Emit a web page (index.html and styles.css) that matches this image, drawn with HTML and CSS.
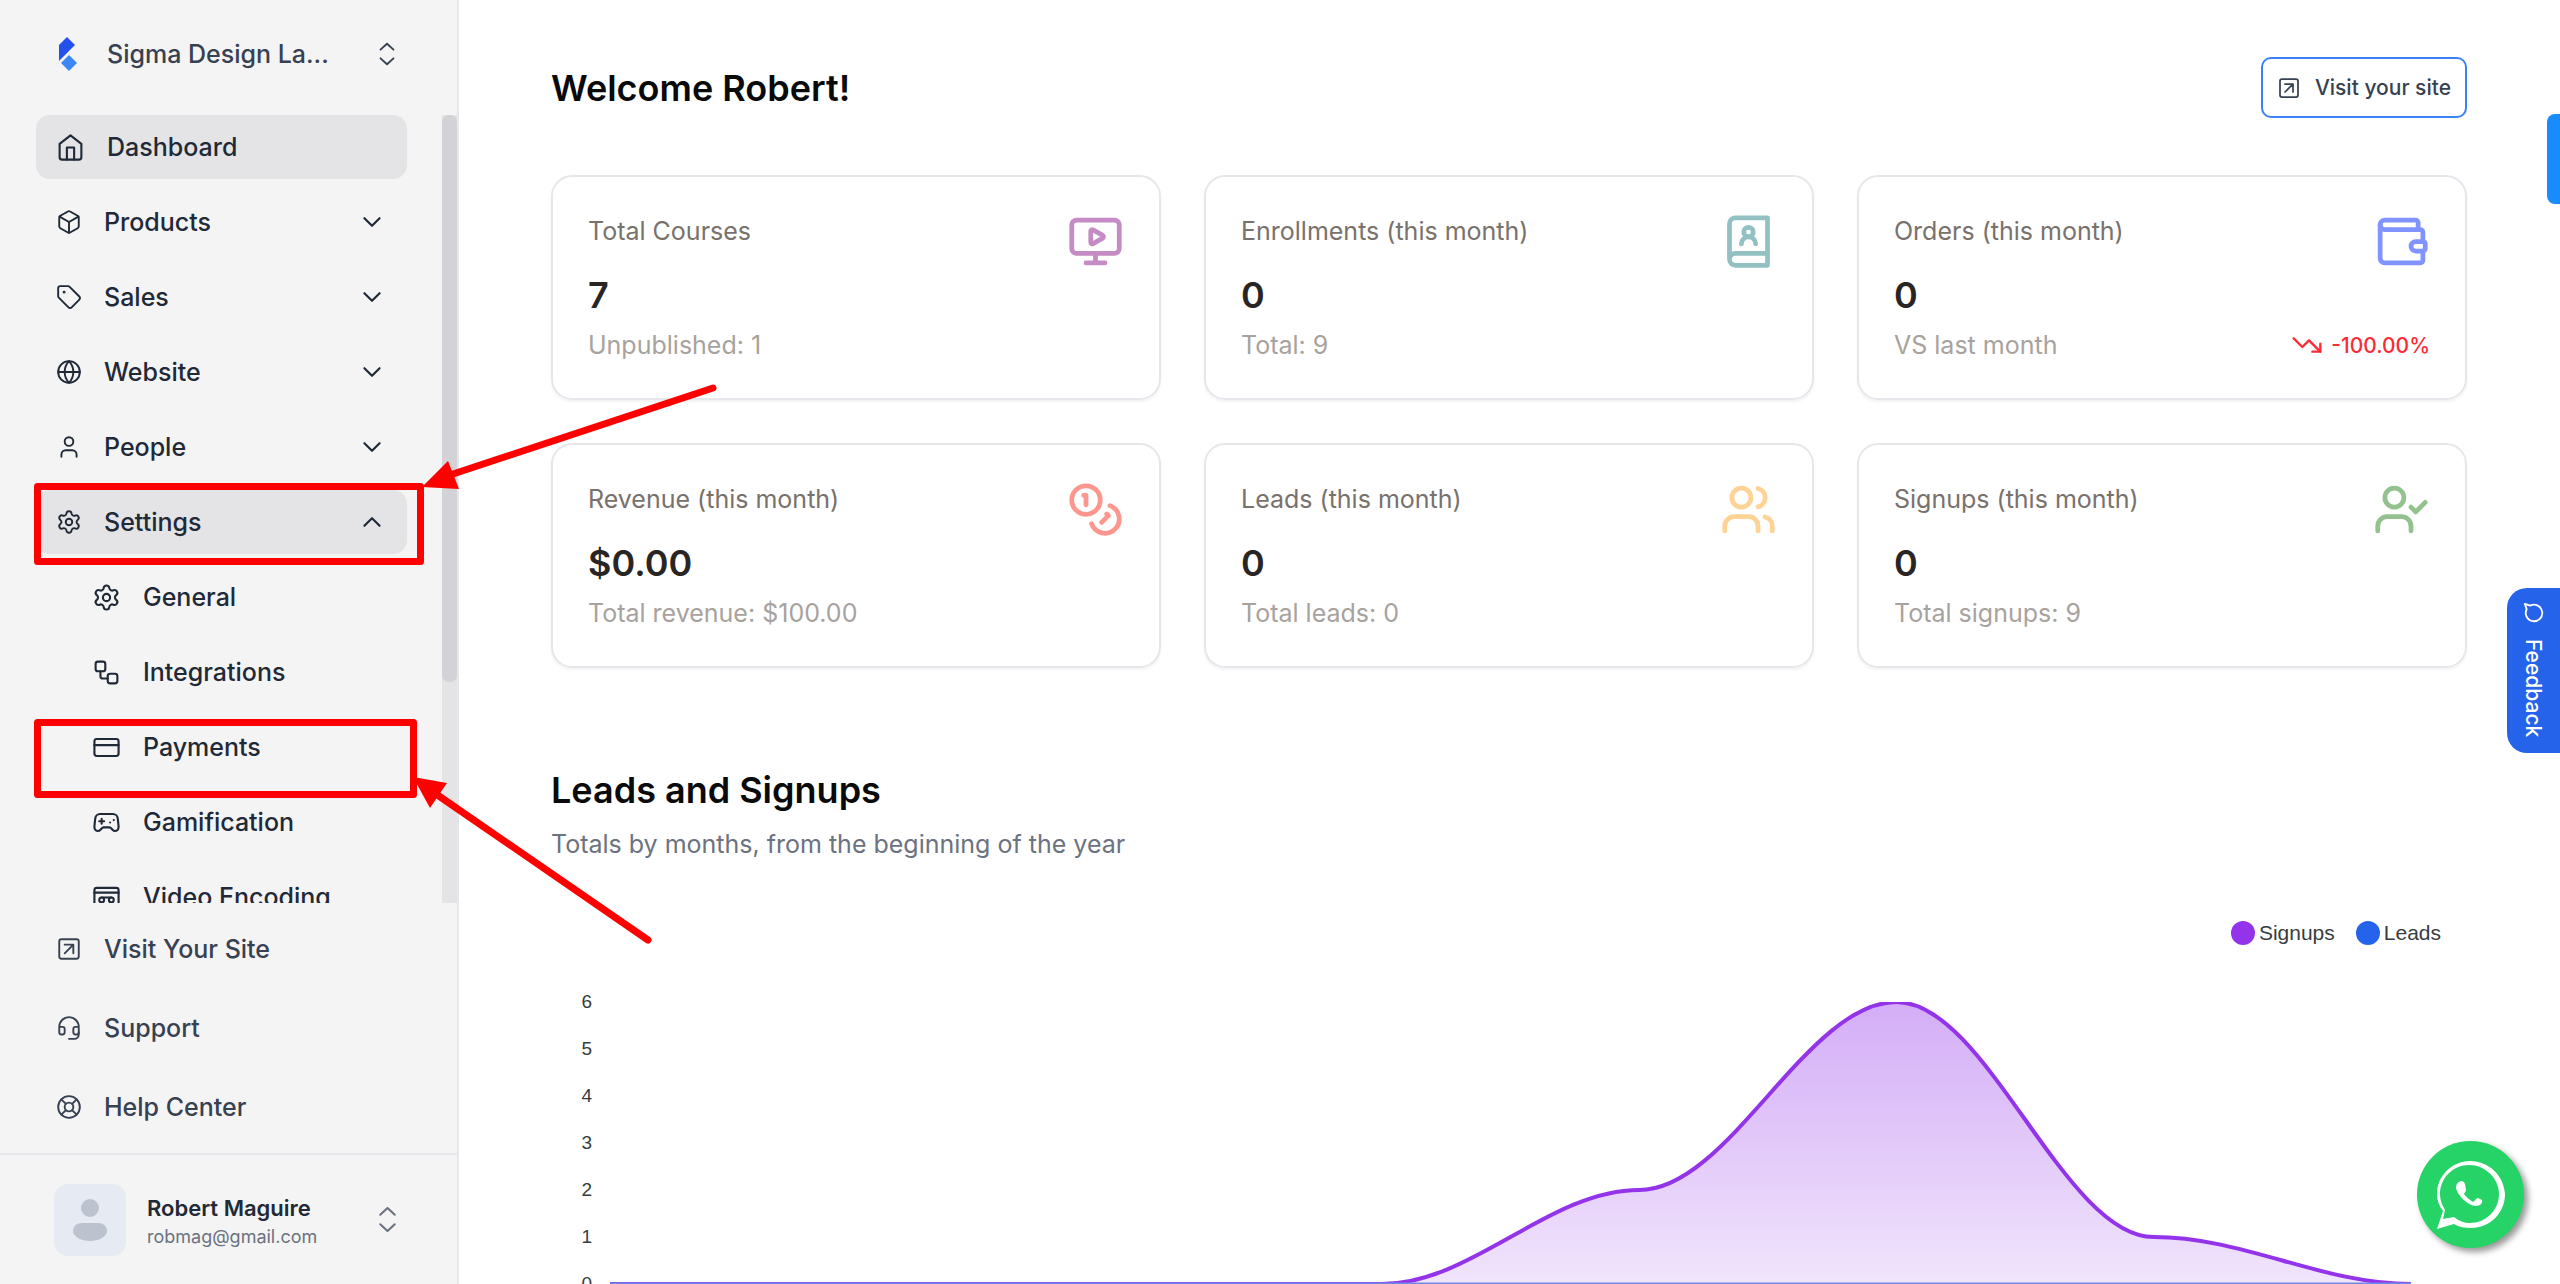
FILE: index.html
```html
<!DOCTYPE html>
<html lang="en">
<head>
  <meta charset="UTF-8">
  <meta name="viewport" content="width=device-width, initial-scale=1.0">
  <title>Dashboard</title>
  <link rel="stylesheet" href="styles.css">
</head>
<body>
  <!-- Icon sprite -->
  <svg class="sprite" aria-hidden="true">
    <symbol id="i-home" viewBox="0 0 24 24"><path d="m3 9 9-7 9 7v11a2 2 0 0 1-2 2H5a2 2 0 0 1-2-2z"/><path d="M9 22V12h6v10"/></symbol>
    <symbol id="i-box" viewBox="0 0 24 24"><path d="M21 8a2 2 0 0 0-1-1.73l-7-4a2 2 0 0 0-2 0l-7 4A2 2 0 0 0 3 8v8a2 2 0 0 0 1 1.73l7 4a2 2 0 0 0 2 0l7-4A2 2 0 0 0 21 16Z"/><path d="m3.3 7 8.7 5 8.7-5M12 22V12"/></symbol>
    <symbol id="i-tag" viewBox="0 0 24 24"><path d="M12.586 2.586A2 2 0 0 0 11.172 2H4a2 2 0 0 0-2 2v7.172a2 2 0 0 0 .586 1.414l8.704 8.704a2.426 2.426 0 0 0 3.42 0l6.58-6.58a2.426 2.426 0 0 0 0-3.42z"/><circle cx="7.5" cy="7.5" r=".5" fill="currentColor"/></symbol>
    <symbol id="i-globe" viewBox="0 0 24 24"><circle cx="12" cy="12" r="10"/><path d="M12 2a14.5 14.5 0 0 0 0 20 14.5 14.5 0 0 0 0-20M2 12h20"/></symbol>
    <symbol id="i-user" viewBox="0 0 24 24"><path d="M19 21v-2a4 4 0 0 0-4-4H9a4 4 0 0 0-4 4v2"/><circle cx="12" cy="7" r="4"/></symbol>
    <symbol id="i-settings" viewBox="0 0 24 24"><path d="M9.671 4.136a2.34 2.34 0 0 1 4.659 0 2.34 2.34 0 0 0 3.319 1.915 2.34 2.34 0 0 1 2.33 4.033 2.34 2.34 0 0 0 0 3.831 2.34 2.34 0 0 1-2.33 4.033 2.34 2.34 0 0 0-3.319 1.915 2.34 2.34 0 0 1-4.659 0 2.34 2.34 0 0 0-3.32-1.915 2.34 2.34 0 0 1-2.33-4.033 2.34 2.34 0 0 0 0-3.831A2.34 2.34 0 0 1 6.35 6.051a2.34 2.34 0 0 0 3.319-1.915"/><circle cx="12" cy="12" r="3"/></symbol>
    <symbol id="i-workflow" viewBox="0 0 24 24"><rect x="3" y="3" width="8" height="8" rx="2"/><path d="M7 11v4a2 2 0 0 0 2 2h4"/><rect x="13" y="13" width="8" height="8" rx="2"/></symbol>
    <symbol id="i-card" viewBox="0 0 24 24"><rect x="2" y="5" width="20" height="14" rx="2"/><path d="M2 10h20"/></symbol>
    <symbol id="i-gamepad" viewBox="0 0 24 24"><path d="M6 11h4M8 9v4M15 12h.01M18 10h.01"/><path d="M17.32 5H6.68a4 4 0 0 0-3.978 3.59c-.006.052-.01.101-.017.152C2.604 9.416 2 14.456 2 16a3 3 0 0 0 3 3c1 0 1.5-.5 2-1l1.414-1.414A2 2 0 0 1 9.828 16h4.344a2 2 0 0 1 1.414.586L17 18c.5.5 1 1 2 1a3 3 0 0 0 3-3c0-1.545-.604-6.584-.685-7.258-.007-.05-.011-.1-.017-.151A4 4 0 0 0 17.32 5z"/></symbol>
    <symbol id="i-videotape" viewBox="0 0 24 24"><rect x="2" y="4" width="20" height="16" rx="2"/><path d="M2 8h20M8 12h8"/><circle cx="8" cy="14" r="2"/><circle cx="16" cy="14" r="2"/></symbol>
    <symbol id="i-external" viewBox="0 0 24 24"><rect x="3" y="3" width="18" height="18" rx="2"/><path d="M8 8h8v8M8 16l8-8"/></symbol>
    <symbol id="i-headset" viewBox="0 0 24 24"><path d="M3 11h3a2 2 0 0 1 2 2v3a2 2 0 0 1-2 2H5a2 2 0 0 1-2-2v-5Zm0 0a9 9 0 1 1 18 0m0 0v5a2 2 0 0 1-2 2h-1a2 2 0 0 1-2-2v-3a2 2 0 0 1 2-2h3Z"/><path d="M21 16v2a4 4 0 0 1-4 4h-5"/></symbol>
    <symbol id="i-buoy" viewBox="0 0 24 24"><circle cx="12" cy="12" r="10"/><circle cx="12" cy="12" r="4"/><path d="m4.93 4.93 4.24 4.24M14.83 9.17l4.24-4.24M14.83 14.83l4.24 4.24M9.17 14.83l-4.24 4.24"/></symbol>
    <symbol id="i-down" viewBox="0 0 24 24"><path d="m5 8.500 7 7 7-7"/></symbol>
    <symbol id="i-up" viewBox="0 0 24 24"><path d="m5 15.500 7-7 7 7"/></symbol>
    <symbol id="i-updown" viewBox="0 0 24 24"><path d="m6 16 6 5.500 6-5.500M6 8l6-5.500L18 8"/></symbol>
    <symbol id="i-monitor" viewBox="0 0 24 24"><path d="M15.033 9.44a.647.647 0 0 1 0 1.12l-4.065 2.352a.645.645 0 0 1-.968-.56V7.648a.645.645 0 0 1 .967-.56z"/><path d="M12 17v4M8 21h8"/><rect x="2" y="3" width="20" height="14" rx="2"/></symbol>
    <symbol id="i-book" viewBox="0 0 24 24"><path d="M15 13a3 3 0 1 0-6 0"/><path d="M4 19.500v-15A2.500 2.500 0 0 1 6.500 2H20v20H6.500a2.500 2.500 0 0 1 0-5H20"/><circle cx="12" cy="8" r="2"/></symbol>
    <symbol id="i-wallet" viewBox="0 0 24 24"><path d="M19 7V4a1 1 0 0 0-1-1H5a2 2 0 0 0 0 4h15a1 1 0 0 1 1 1v4h-3a2 2 0 0 0 0 4h3a1 1 0 0 0 1-1v-2a1 1 0 0 0-1-1"/><path d="M3 5v14a2 2 0 0 0 2 2h15a1 1 0 0 0 1-1v-4"/></symbol>
    <symbol id="i-coins" viewBox="0 0 24 24"><circle cx="8" cy="8" r="6"/><path d="M18.090 10.370A6 6 0 1 1 10.340 18M7 6h1v4M16.710 13.880l.7.71-2.820 2.820"/></symbol>
    <symbol id="i-users" viewBox="0 0 24 24"><path d="M16 21v-2a4 4 0 0 0-4-4H6a4 4 0 0 0-4 4v2"/><circle cx="9" cy="7" r="4"/><path d="M22 21v-2a4 4 0 0 0-3-3.870M16 3.130a4 4 0 0 1 0 7.750"/></symbol>
    <symbol id="i-usercheck" viewBox="0 0 24 24"><path d="m16 11 2 2 4-4M16 21v-2a4 4 0 0 0-4-4H6a4 4 0 0 0-4 4v2"/><circle cx="9" cy="7" r="4"/></symbol>
    <symbol id="i-trend" viewBox="0 0 24 24"><path d="M16 17h6v-6"/><path d="m22 17-8.500-8.500-5 5L2 7"/></symbol>
    <symbol id="i-chat" viewBox="0 0 24 24"><path d="M7.900 20A9 9 0 1 0 4 16.100L2 22Z"/></symbol>
  </svg>

  <div class="layout">
    <aside class="sidebar">
      <button class="workspace" type="button">
        <svg class="workspace-logo" viewBox="0 0 20 34"><path fill="#2450eb" d="M9 0l8 8L1 24V8z"/><path fill="#3b86f7" d="M11 18l8 8-8 8-8-8z"/></svg>
        <span class="workspace-name">Sigma Design La...</span>
        <svg class="icon"><use href="#i-updown"/></svg>
      </button>

      <div class="nav-scroll">
        <nav class="nav">
          <a class="nav-item active" href="#"><svg class="icon icon-lg"><use href="#i-home"/></svg><span>Dashboard</span></a>
          <button class="nav-item" type="button"><svg class="icon"><use href="#i-box"/></svg><span>Products</span><svg class="icon chevron"><use href="#i-down"/></svg></button>
          <button class="nav-item" type="button"><svg class="icon"><use href="#i-tag"/></svg><span>Sales</span><svg class="icon chevron"><use href="#i-down"/></svg></button>
          <button class="nav-item" type="button"><svg class="icon"><use href="#i-globe"/></svg><span>Website</span><svg class="icon chevron"><use href="#i-down"/></svg></button>
          <button class="nav-item" type="button"><svg class="icon"><use href="#i-user"/></svg><span>People</span><svg class="icon chevron"><use href="#i-down"/></svg></button>
          <button class="nav-item active" type="button"><svg class="icon"><use href="#i-settings"/></svg><span>Settings</span><svg class="icon chevron"><use href="#i-up"/></svg></button>
          <a class="nav-item nav-sub" href="#"><svg class="icon icon-lg"><use href="#i-settings"/></svg><span>General</span></a>
          <a class="nav-item nav-sub" href="#"><svg class="icon icon-lg"><use href="#i-workflow"/></svg><span>Integrations</span></a>
          <a class="nav-item nav-sub" href="#"><svg class="icon icon-lg"><use href="#i-card"/></svg><span>Payments</span></a>
          <a class="nav-item nav-sub" href="#"><svg class="icon icon-lg"><use href="#i-gamepad"/></svg><span>Gamification</span></a>
          <a class="nav-item nav-sub" href="#"><svg class="icon icon-lg"><use href="#i-videotape"/></svg><span>Video Encoding</span></a>
        </nav>
        <div class="scrollbar"><div class="scrollbar-thumb"></div></div>
      </div>

      <div class="nav-bottom">
        <a class="nav-item" href="#"><svg class="icon"><use href="#i-external"/></svg><span>Visit Your Site</span></a>
        <a class="nav-item" href="#"><svg class="icon"><use href="#i-headset"/></svg><span>Support</span></a>
        <a class="nav-item" href="#"><svg class="icon"><use href="#i-buoy"/></svg><span>Help Center</span></a>
      </div>

      <button class="account" type="button">
        <svg class="avatar" viewBox="0 0 72 72"><circle cx="36" cy="24" r="9"/><path d="M28 39h16c6 0 9 4 9 8 0 6-9 10-17 10s-17-4-17-10c0-4 3-8 9-8z"/></svg>
        <span class="account-text">
          <span class="account-name">Robert Maguire</span>
          <span class="account-email">robmag@gmail.com</span>
        </span>
        <svg class="icon icon-lg"><use href="#i-updown"/></svg>
      </button>
    </aside>

    <main class="main">
      <header class="page-header">
        <h1>Welcome Robert!</h1>
        <a class="visit-btn" href="#"><svg class="icon icon-sm"><use href="#i-external"/></svg>Visit your site</a>
      </header>

      <section class="cards">
        <article class="card">
          <p class="card-label">Total Courses</p>
          <p class="card-value">7</p>
          <p class="card-note">Unpublished: 1</p>
          <svg class="icon card-icon purple"><use href="#i-monitor"/></svg>
        </article>
        <article class="card">
          <p class="card-label">Enrollments (this month)</p>
          <p class="card-value">0</p>
          <p class="card-note">Total: 9</p>
          <svg class="icon card-icon teal"><use href="#i-book"/></svg>
        </article>
        <article class="card">
          <p class="card-label">Orders (this month)</p>
          <p class="card-value">0</p>
          <p class="card-note">VS last month</p>
          <svg class="icon card-icon indigo"><use href="#i-wallet"/></svg>
          <p class="card-trend"><svg class="icon icon-trend"><use href="#i-trend"/></svg>-100.00%</p>
        </article>
        <article class="card">
          <p class="card-label">Revenue (this month)</p>
          <p class="card-value">$0.00</p>
          <p class="card-note">Total revenue: $100.00</p>
          <svg class="icon card-icon coral"><use href="#i-coins"/></svg>
        </article>
        <article class="card">
          <p class="card-label">Leads (this month)</p>
          <p class="card-value">0</p>
          <p class="card-note">Total leads: 0</p>
          <svg class="icon card-icon amber"><use href="#i-users"/></svg>
        </article>
        <article class="card">
          <p class="card-label">Signups (this month)</p>
          <p class="card-value">0</p>
          <p class="card-note">Total signups: 9</p>
          <svg class="icon card-icon green"><use href="#i-usercheck"/></svg>
        </article>
      </section>

      <section class="report">
        <h2>Leads and Signups</h2>
        <p class="report-sub">Totals by months, from the beginning of the year</p>
        <div class="legend">
          <span class="legend-item"><i class="dot dot-signups"></i>Signups</span>
          <span class="legend-item"><i class="dot dot-leads"></i>Leads</span>
        </div>
        <div class="chart">
          <div class="axis">
            <span>6</span><span>5</span><span>4</span><span>3</span><span>2</span><span>1</span><span>0</span>
          </div>
          <svg class="plot" viewBox="0 0 1400 282" preserveAspectRatio="none" role="img" aria-label="Signups and leads by month">
            <defs>
              <linearGradient id="fill" x1="0" y1="0" x2="0" y2="1">
                <stop offset="0" stop-color="#9333ea" stop-opacity=".4"/>
                <stop offset="1" stop-color="#9333ea" stop-opacity=".13"/>
              </linearGradient>
            </defs>
            <path fill="url(#fill)" d="M0 282H600C670 282 730 188 800 188S930 0 1000 0s130 235 200 235 130 47 200 47z"/>
            <path class="line-signups" d="M0 282H600C670 282 730 188 800 188S930 0 1000 0s130 235 200 235 130 47 200 47"/>
            <path class="line-leads" d="M0 282H1400"/>
          </svg>
        </div>
      </section>
    </main>
  </div>

  <div class="side-tab"></div>
  <button class="feedback" type="button"><svg class="icon icon-chat"><use href="#i-chat"/></svg>Feedback</button>

  <a class="whatsapp" href="#" aria-label="WhatsApp">
    <svg viewBox="0 0 68 68">
      <path fill="#fff" fill-rule="evenodd" d="M33 0c19 0 34 15 35 33 0 19-15 34-34 34-6 0-12-1-17-4L0 68l6-18C2 45 0 39 0 33 0 15 15 0 33 0zm-1 4C16 4 3 17 3 33c0 6 2 11 5 16L6 58l11-2c5 4 10 6 16 6 16 0 29-13 29-29S48 4 32 4z"/>
      <path fill="#fff" d="M22 21c2-2 5-1 6 2l1 6c0 2-2 3-2 4 2 3 6 6 9 8 2-1 3-4 5-4l4 2c1 3-2 6-6 6-8 0-20-12-20-19 0-2 1-4 3-5z"/>
    </svg>
  </a>

  <!-- Walkthrough markers for Settings > Payments -->
  <svg class="markers" viewBox="0 0 760 960" aria-hidden="true">
    <rect x="37.500" y="486.500" width="383" height="75"/>
    <rect x="37.500" y="722.500" width="376" height="72"/>
    <path d="M713 388 450 475M648 940 436 794"/>
    <path class="head" d="M422 487l26-26 11 28zM413 777l34 6-17 25z"/>
  </svg>
</body>
</html>
```
FILE: styles.css
```css
* {
  margin: 0;
  padding: 0;
  box-sizing: border-box;
}

body {
  position: relative;
  height: 100vh;
  overflow: hidden;
  background-color: #ffffff;
  color: #1f2937;
  font-family: Inter, "Liberation Sans", sans-serif;
}

button {
  border: none;
  background: none;
  color: inherit;
  font: inherit;
  text-align: left;
  cursor: pointer;
}

a {
  color: inherit;
  text-decoration: none;
}

.sprite {
  display: none;
}

.layout {
  display: flex;
  height: 100%;
}

/* Icons */
.icon {
  flex: none;
  width: 26px;
  height: 26px;
  fill: none;
  stroke: currentColor;
  stroke-width: 1.75;
  stroke-linecap: round;
  stroke-linejoin: round;
}

.icon-sm {
  width: 24px;
  height: 24px;
}

.icon-lg {
  width: 29px;
  height: 29px;
}

/* Sidebar */
.sidebar {
  flex: none;
  display: flex;
  flex-direction: column;
  width: 459px;
  background-color: #f4f4f4;
  border-right: 2px solid #e5e7eb;
}

.workspace {
  display: flex;
  align-items: center;
  height: 115px;
  padding: 0 57px 8px 58px;
  color: #374151;
  font-size: 25px;
  font-weight: 500;
}

.workspace-logo {
  width: 20px;
  height: 34px;
  margin-right: 29px;
}

.workspace-name {
  flex: 1;
  white-space: nowrap;
}

.nav-scroll {
  flex: 1;
  display: flex;
  min-height: 0;
}

.nav {
  flex: 1;
  display: flex;
  flex-direction: column;
  gap: 11px;
  padding: 0 35px 0 36px;
  overflow: hidden;
}

.nav-item {
  flex: none;
  display: flex;
  align-items: center;
  gap: 22px;
  height: 64px;
  padding: 0 22px 0 20px;
  border-radius: 14px;
  font-size: 25px;
  font-weight: 500;
}

.nav-item.active {
  background-color: #e4e4e6;
}

.nav-sub {
  padding-left: 56px;
}

.chevron {
  margin-left: auto;
  stroke-width: 2;
}

.scrollbar {
  width: 15px;
  background-color: #e4e4e7;
}

.scrollbar-thumb {
  height: 72%;
  border-radius: 7px;
  background-color: #d2d2d7;
}

.nav-bottom {
  display: flex;
  flex-direction: column;
  gap: 15px;
  padding: 14px 35px 14px 36px;
  color: #374151;
}

.account {
  display: flex;
  align-items: center;
  height: 131px;
  padding: 0 55px 0 54px;
  border-top: 2px solid #e5e7eb;
  color: #6b7280;
}

.avatar {
  width: 72px;
  height: 72px;
  margin-right: 21px;
  border-radius: 14px;
  background-color: #e6eaf3;
  fill: #bcc3ce;
}

.account-text {
  flex: 1;
  display: flex;
  flex-direction: column;
  padding-top: 4px;
}

.account-name {
  color: #1f2937;
  font-size: 22px;
  font-weight: 600;
  line-height: 30px;
}

.account-email {
  font-size: 18px;
  line-height: 28px;
}

/* Main column */
.main {
  flex: 1;
  min-width: 0;
  padding: 57px 93px 0 92px;
  overflow: hidden;
}

.page-header {
  display: flex;
  align-items: center;
  justify-content: space-between;
  margin-bottom: 57px;
}

h1,
h2 {
  color: #0a0a0a;
  font-size: 36px;
  font-weight: 600;
  line-height: 44px;
}

.visit-btn {
  display: flex;
  align-items: center;
  gap: 14px;
  height: 61px;
  padding: 0 14px;
  border: 2px solid #3b82f6;
  border-radius: 10px;
  color: #374151;
  font-size: 21px;
  font-weight: 500;
}

.cards {
  display: grid;
  grid-template-columns: repeat(3, 1fr);
  gap: 43px;
}

.card {
  display: grid;
  grid-template-columns: 1fr auto;
  grid-template-rows: 40px 88px 12px;
  height: 225px;
  padding: 34px 35px;
  border: 2px solid #e5e7eb;
  border-radius: 21px;
  box-shadow: 0 2px 3px rgba(0, 0, 0, 0.05);
}

.card-label,
.card-value,
.card-note,
.card-trend {
  grid-column: 1;
  align-self: center;
}

.card-label {
  color: #78716c;
  font-size: 25px;
}

.card-value {
  color: #292524;
  font-size: 36px;
  font-weight: 600;
}

.card-note {
  color: #a8a29e;
  font-size: 25px;
}

.card-trend {
  grid-column: 2;
  grid-row: 3;
  display: flex;
  align-items: center;
  gap: 8px;
  color: #fb2c36;
  font-size: 21px;
  font-weight: 500;
}

.icon-trend {
  width: 32px;
  height: 32px;
}

.card-icon {
  grid-column: 2;
  grid-row: 1 / 3;
  justify-self: end;
  width: 57px;
  height: 57px;
  margin-top: 2px;
  stroke-width: 2;
}

.purple { color: #c48bc4; }
.teal { color: #93c1c3; }
.indigo { color: #8093ff; }
.coral { color: #ff968d; }
.amber { color: #ffd296; }
.green { color: #93c28f; }

/* Chart */
.report {
  margin-top: 100px;
}

.report-sub {
  margin-top: 14px;
  color: #6b7280;
  font-size: 25px;
  line-height: 36px;
}

.legend {
  display: flex;
  justify-content: flex-end;
  gap: 21px;
  margin-top: 59px;
  padding-right: 26px;
  color: #373d3f;
  font-family: "Liberation Sans", Arial, sans-serif;
  font-size: 21px;
  line-height: 24px;
}

.legend-item {
  display: flex;
  align-items: center;
  gap: 4px;
}

.dot {
  width: 24px;
  height: 24px;
  border-radius: 50%;
}

.dot-signups {
  background-color: #9333ea;
}

.dot-leads {
  background-color: #2563eb;
}

.chart {
  display: flex;
  align-items: flex-start;
  margin-top: 33px;
  padding-right: 56px;
}

.axis {
  display: flex;
  flex-direction: column;
  width: 41px;
  margin-right: 18px;
  color: #373d3f;
  font-family: "Liberation Sans", Arial, sans-serif;
  font-size: 19px;
  line-height: 47px;
  text-align: right;
}

.plot {
  flex: 1;
  min-width: 0;
  height: 282px;
  margin-top: 24px;
}

.line-signups,
.line-leads {
  fill: none;
  stroke: #9333ea;
  stroke-width: 4;
  vector-effect: non-scaling-stroke;
}

.line-leads {
  stroke: #6d8ae8;
  stroke-width: 3;
}

/* Floating widgets */
.side-tab {
  position: absolute;
  top: 114px;
  right: 0;
  width: 13px;
  height: 90px;
  border-radius: 8px 0 0 8px;
  background-color: #188bff;
}

.feedback {
  position: absolute;
  top: 588px;
  right: 0;
  display: flex;
  align-items: center;
  gap: 15px;
  width: 53px;
  height: 165px;
  padding: 14px 0;
  border-radius: 20px 0 0 20px;
  background-color: #2563eb;
  color: #ffffff;
  font-size: 21px;
  font-weight: 500;
  writing-mode: vertical-rl;
}

.icon-chat {
  width: 22px;
  height: 22px;
  stroke-width: 2;
  transform: rotate(90deg);
}

.whatsapp {
  position: absolute;
  right: 36px;
  bottom: 36px;
  display: flex;
  align-items: center;
  justify-content: center;
  width: 107px;
  height: 107px;
  border-radius: 50%;
  background-color: #25d366;
  box-shadow: 4px 4px 6px #999999;
}

.whatsapp svg {
  width: 68px;
  height: 68px;
}

.markers {
  position: absolute;
  top: 0;
  left: 0;
  width: 760px;
  height: 960px;
  fill: none;
  stroke: #ff0000;
  stroke-width: 7;
  stroke-linecap: round;
  stroke-linejoin: round;
  pointer-events: none;
}

.markers .head {
  fill: #ff0000;
  stroke: none;
}
```
